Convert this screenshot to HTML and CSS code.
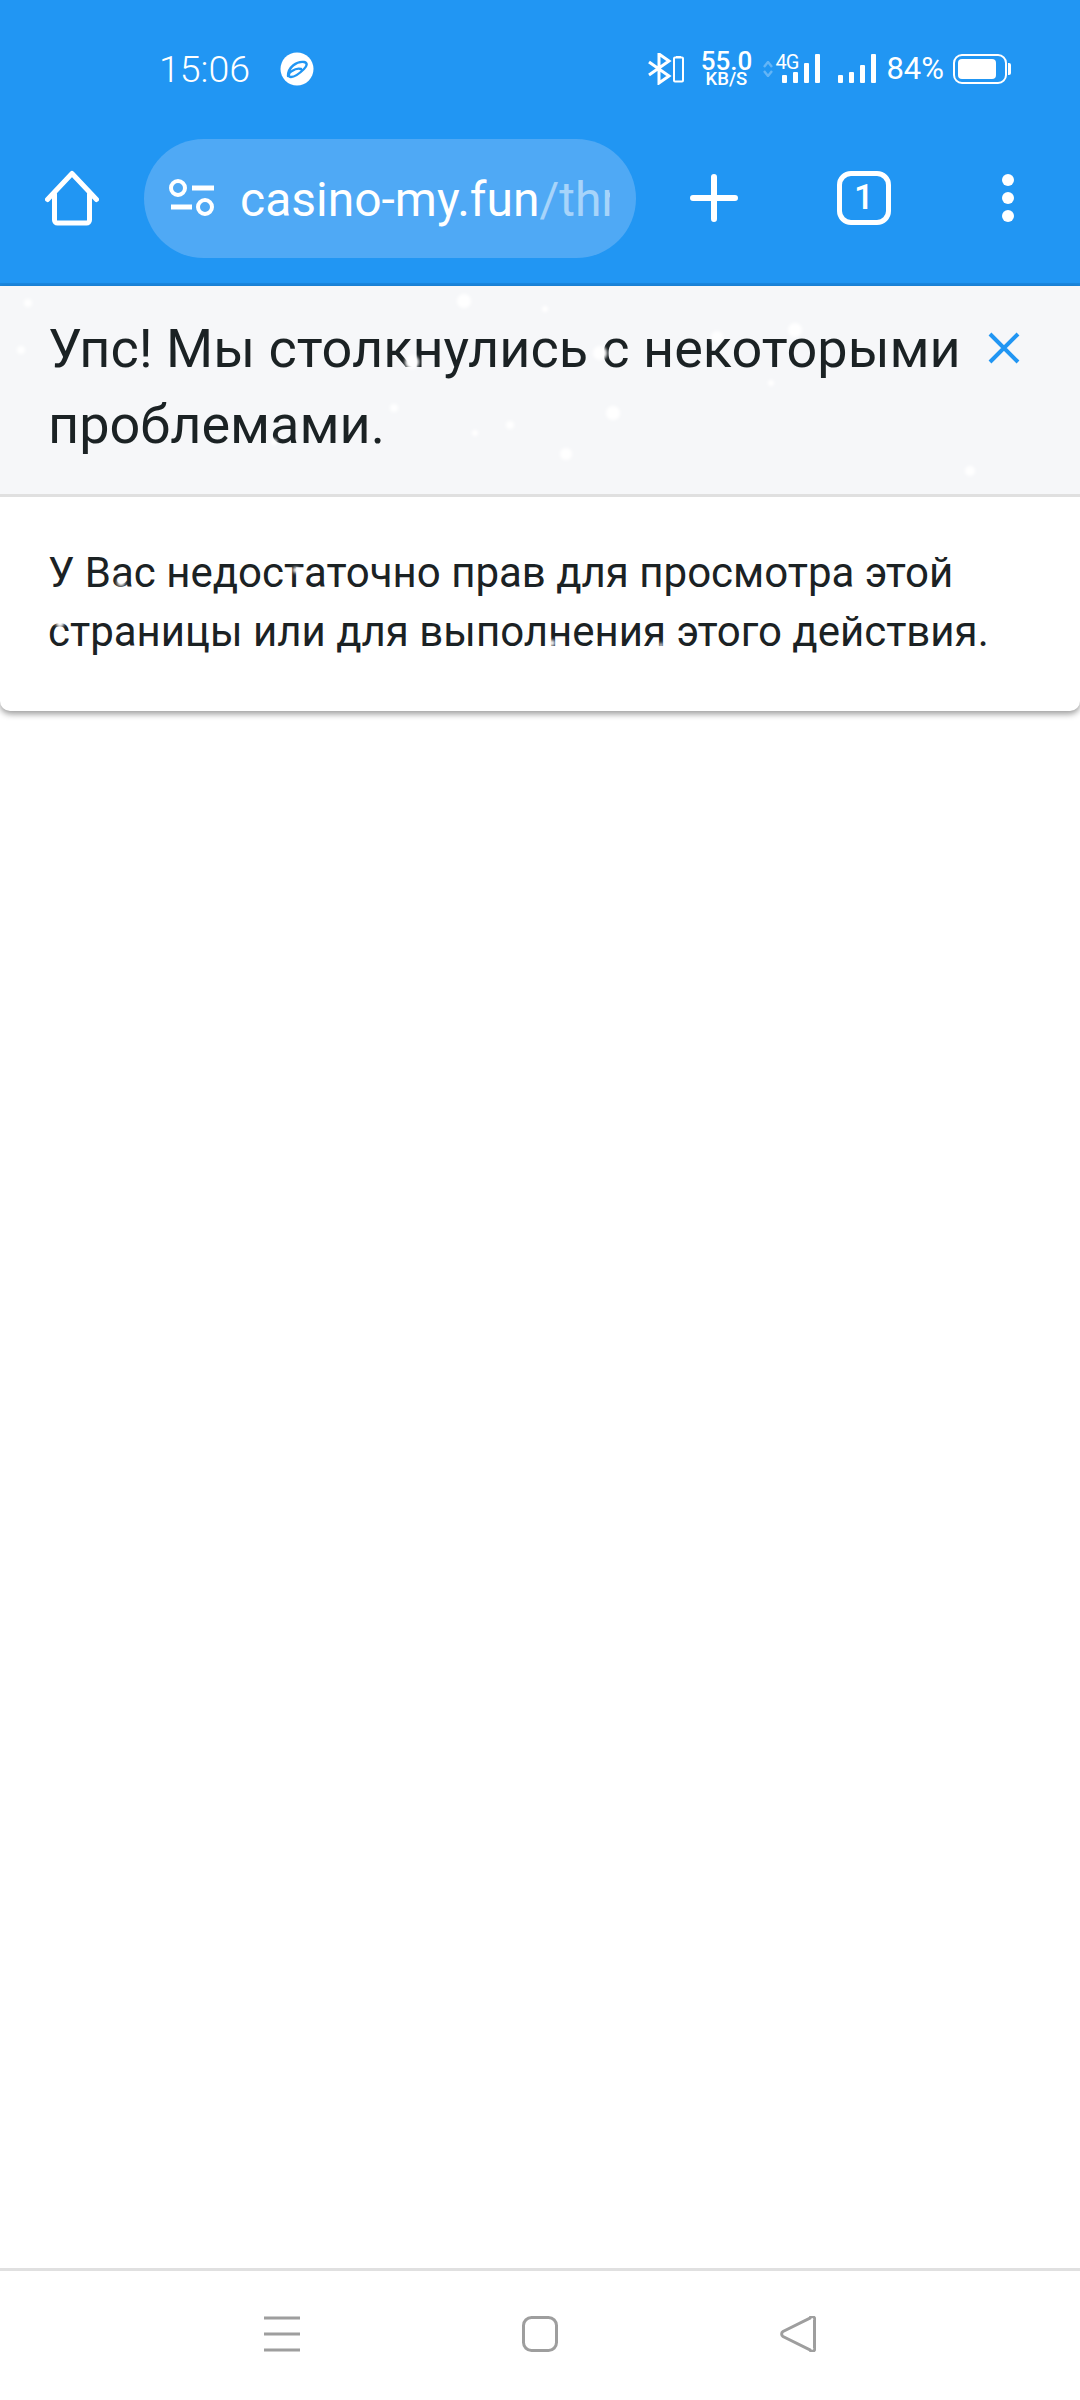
FILE: index.html
```html
<!DOCTYPE html>
<html lang="ru">
<head>
    <meta charset="UTF-8">
    <meta name="viewport" content="width=device-width, initial-scale=1.0">
    <title>Упс!</title>
    <link rel="stylesheet" href="styles.css">
</head>
<body>
    <div class="screen">
        <div class="topbar">
            <div class="status-bar">
                <span class="clock">15:06</span>
                <svg class="status-app" width="34" height="34" viewBox="0 0 34 34">
                    <circle cx="17" cy="17" r="16.5" fill="#fff"/>
                    <path d="M8 24 C8 15 17 9 24 10 C28 11 27 14 24 17 C21 20 15 25 11 25 C8 25 8 21 12 19 C15 17 18 16 21 17" fill="none" stroke="#2196f3" stroke-width="2.400" stroke-linecap="round"/>
                </svg>
                <div class="status-right">
                    <svg class="status-bt" width="36" height="32" viewBox="0 0 36 32">
                        <path d="M1 22 L21 8 L11 1 V30 L21 23 L1 9" fill="none" stroke="#fff" stroke-width="3"/>
                        <rect x="26" y="4.500" width="9" height="24" rx="1" fill="none" stroke="#fff" stroke-width="2"/>
                        <rect x="28" y="3" width="5" height="2" fill="#fff"/>
                    </svg>
                    <div class="speed">
                        <span class="speed-value">55.0</span>
                        <span class="speed-unit">KB/S</span>
                    </div>
                    <svg class="status-arrows" width="10" height="16" viewBox="0 0 10 16">
                        <path d="M1 6 L5 1 L9 6 M1 10 L5 15 L9 10" fill="none" stroke="#fff" stroke-opacity="0.3" stroke-width="2.400"/>
                    </svg>
                    <div class="signal signal-4g">
                        <span class="net-type">4G</span>
                        <span class="bar bar-1"></span>
                        <span class="bar bar-2"></span>
                        <span class="bar bar-3"></span>
                        <span class="bar bar-4"></span>
                    </div>
                    <div class="signal">
                        <span class="bar bar-1"></span>
                        <span class="bar bar-2"></span>
                        <span class="bar bar-3"></span>
                        <span class="bar bar-4"></span>
                    </div>
                    <span class="battery-pct">84%</span>
                    <div class="battery">
                        <div class="battery-body"><div class="battery-level"></div></div>
                        <div class="battery-nub"></div>
                    </div>
                </div>
            </div>
            <div class="toolbar">
                <svg class="home-icon" width="54" height="56" viewBox="0 0 54 56">
                    <path d="M2.500 29.500 L27 3.500 L51.500 29.500 M9.500 24 V50 a3 3 0 0 0 3 3 H41.500 a3 3 0 0 0 3-3 V24" fill="none" stroke="#fff" stroke-width="5" stroke-linecap="round" stroke-linejoin="round"/>
                </svg>
                <div class="url-pill">
                    <svg class="tune-icon" width="46" height="38" viewBox="0 0 46 38">
                        <circle cx="9" cy="9" r="7" fill="none" stroke="#fff" stroke-width="4"/>
                        <rect x="23" y="6.500" width="22" height="5" fill="#fff"/>
                        <circle cx="36" cy="28" r="7" fill="none" stroke="#fff" stroke-width="4"/>
                        <rect x="2" y="25.500" width="21" height="5" fill="#fff"/>
                    </svg>
                    <div class="url-text">casino-my.fun<span class="url-path">/threads</span></div>
                </div>
                <svg class="plus-icon" width="48" height="48" viewBox="0 0 48 48">
                    <path d="M24 3 V45 M3 24 H45" stroke="#fff" stroke-width="6" stroke-linecap="round"/>
                </svg>
                <div class="tab-count">1</div>
                <div class="menu-dots">
                    <span class="dot"></span>
                    <span class="dot"></span>
                    <span class="dot"></span>
                </div>
            </div>
        </div>

        <div class="error-block">
            <div class="error-header">
                <h1 class="error-title">Упс! Мы столкнулись с некоторыми проблемами.</h1>
                <svg class="close-icon" width="32" height="32" viewBox="0 0 32 32">
                    <path d="M2 2 L30 30 M30 2 L2 30" stroke="#2196f3" stroke-width="4"/>
                </svg>
            </div>
            <div class="error-body">У Вас недостаточно прав для просмотра этой страницы или для выполнения этого действия.</div>
        </div>

        <div class="page-rest"></div>

        <div class="nav-bar">
            <svg width="36" height="36" viewBox="0 0 36 36">
                <path d="M0 2 H36 M0 18 H36 M0 34 H36" stroke="#9e9e9e" stroke-width="3"/>
            </svg>
            <svg width="36" height="36" viewBox="0 0 36 36">
                <rect x="1.500" y="1.500" width="33" height="33" rx="8" fill="none" stroke="#9e9e9e" stroke-width="3"/>
            </svg>
            <svg width="36" height="36" viewBox="0 0 36 36">
                <path d="M30 2 a2.500 2.500 0 0 1 4.500 2.500 V31.500 a2.500 2.500 0 0 1-4.500 2.500 L3 20.500 a3 3 0 0 1 0-5 Z" fill="none" stroke="#9e9e9e" stroke-width="3"/>
            </svg>
        </div>

        <!-- snow from the forum theme, it falls over the text -->
        <svg class="snow" width="1080" height="800" viewBox="0 0 1080 800">
            <defs><filter id="soft"><feGaussianBlur stdDeviation="1.500"/></filter></defs>
            <g fill="#fff" filter="url(#soft)">
                <circle cx="28" cy="303" r="4"/>
                <circle cx="464" cy="301" r="7"/>
                <circle cx="21" cy="350" r="4"/>
                <circle cx="412" cy="362" r="7"/>
                <circle cx="394" cy="408" r="4"/>
                <circle cx="510" cy="425" r="4"/>
                <circle cx="475" cy="433" r="3"/>
                <circle cx="274" cy="442" r="3"/>
                <circle cx="545" cy="309" r="3"/>
                <circle cx="600" cy="353" r="7"/>
                <circle cx="717" cy="337" r="6"/>
                <circle cx="795" cy="330" r="7"/>
                <circle cx="771" cy="383" r="3"/>
                <circle cx="613" cy="413" r="7"/>
                <circle cx="566" cy="454" r="6"/>
                <circle cx="970" cy="471" r="5"/>
                <circle cx="121" cy="582" r="4"/>
                <circle cx="296" cy="570" r="3"/>
                <circle cx="60" cy="623" r="4"/>
                <circle cx="552" cy="643" r="3"/>
                <circle cx="661" cy="645" r="2"/>
            </g>
        </svg>
    </div>
</body>
</html>
```

FILE: styles.css
```css
body, html {
    margin: 0;
    padding: 0;
    height: 100%;
    font-family: Roboto, "Noto Sans", sans-serif;
    background-color: #fff;
}
.screen {
    position: relative;
    display: flex;
    flex-direction: column;
    width: 1080px;
    height: 2400px;
    overflow: hidden;
}

/* blue top area */
.topbar {
    background-color: #2196f3;
    border-bottom: 3px solid #1b88e0;
    color: #fff;
}
.status-bar {
    display: flex;
    align-items: center;
    height: 113px;
    padding: 24px 69px 0 159px;
    box-sizing: border-box;
}
.clock {
    font-size: 37.500px;
    font-weight: 300;
    width: 121px;
}
.status-right {
    display: flex;
    align-items: center;
    margin-left: auto;
}
.status-bt {
    margin-right: 16px;
}
.speed {
    display: flex;
    flex-direction: column;
    align-items: center;
    width: 52px;
    margin-right: 11px;
    font-weight: 500;
}
.speed-value {
    font-size: 26px;
    line-height: 22px;
}
.speed-unit {
    font-size: 18.500px;
    line-height: 15px;
}
.status-arrows {
    margin-right: 9px;
}
.signal {
    position: relative;
    display: flex;
    align-items: flex-end;
    justify-content: space-between;
    width: 38px;
    height: 29px;
}
.signal-4g {
    margin-right: 18px;
}
.net-type {
    position: absolute;
    left: -7px;
    top: -1px;
    font-size: 20px;
    line-height: 18px;
    font-weight: 400;
    letter-spacing: -1px;
}
.bar {
    width: 5px;
    background-color: #fff;
    border-radius: 1px;
}
.bar-1 { height: 8px; }
.bar-2 { height: 11px; }
.bar-3 { height: 18px; }
.bar-4 { height: 29px; }
.signal-4g .bar-3 { height: 20px; }
.battery-pct {
    margin-left: 10px;
    margin-right: 9px;
    font-size: 31px;
}
.battery {
    display: flex;
    align-items: center;
}
.battery-body {
    width: 54px;
    height: 30px;
    box-sizing: border-box;
    padding: 3px;
    border: 2.500px solid #fff;
    border-radius: 9px;
}
.battery-level {
    width: 38px;
    height: 100%;
    background-color: #fff;
    border-radius: 4px;
}
.battery-nub {
    width: 3px;
    height: 12px;
    margin-left: 1px;
    background-color: #fff;
    border-radius: 0 2px 2px 0;
}

.toolbar {
    display: flex;
    align-items: center;
    height: 170px;
    padding-left: 45px;
}
.toolbar svg {
    flex-shrink: 0;
}
.url-pill {
    display: flex;
    align-items: center;
    width: 492px;
    height: 119px;
    margin-left: 45px;
    padding: 0 26px 0 25px;
    box-sizing: border-box;
    background-color: #4fa9f5;
    border-radius: 60px;
}
.url-text {
    margin-left: 25px;
    padding-top: 3px;
    flex: 1;
    overflow: hidden;
    white-space: nowrap;
    font-size: 48px;
}
.url-path {
    color: rgba(255,255,255,0.5);
}
.plus-icon {
    margin-left: 54px;
}
.tab-count {
    width: 54px;
    height: 54px;
    margin-left: 99px;
    box-sizing: border-box;
    border: 5px solid #fff;
    border-radius: 14px;
    text-align: center;
    font-size: 35px;
    font-weight: 500;
    line-height: 44px;
}
.menu-dots {
    display: flex;
    flex-direction: column;
    gap: 6px;
    margin-left: 111px;
}
.dot {
    width: 12px;
    height: 12px;
    background-color: #fff;
    border-radius: 50%;
}

/* error message */
.error-block {
    background-color: #fff;
    border-radius: 0 0 10px 10px;
    box-shadow: 0 3px 6px rgba(0,0,0,0.4);
    color: #1b2224;
}
.error-header {
    display: flex;
    justify-content: space-between;
    height: 211px;
    padding: 25px 60px 0 48px;
    box-sizing: border-box;
    background-color: #f6f7f9;
    border-bottom: 3px solid #e0e0e0;
}
.error-title {
    width: 930px;
    margin: 0;
    font-size: 54px;
    font-weight: 400;
    line-height: 76px;
}
.close-icon {
    margin-top: 21px;
}
.error-body {
    height: 214px;
    padding: 46px 30px 0 48px;
    box-sizing: border-box;
    font-size: 42px;
    line-height: 59px;
}
.page-rest {
    flex: 1;
}

/* android buttons */
.nav-bar {
    display: flex;
    justify-content: center;
    gap: 222px;
    height: 132px;
    padding-top: 45px;
    box-sizing: border-box;
    border-top: 3px solid #e0e0e0;
}
.snow {
    position: absolute;
    left: 0;
    top: 0;
    pointer-events: none;
}
```
